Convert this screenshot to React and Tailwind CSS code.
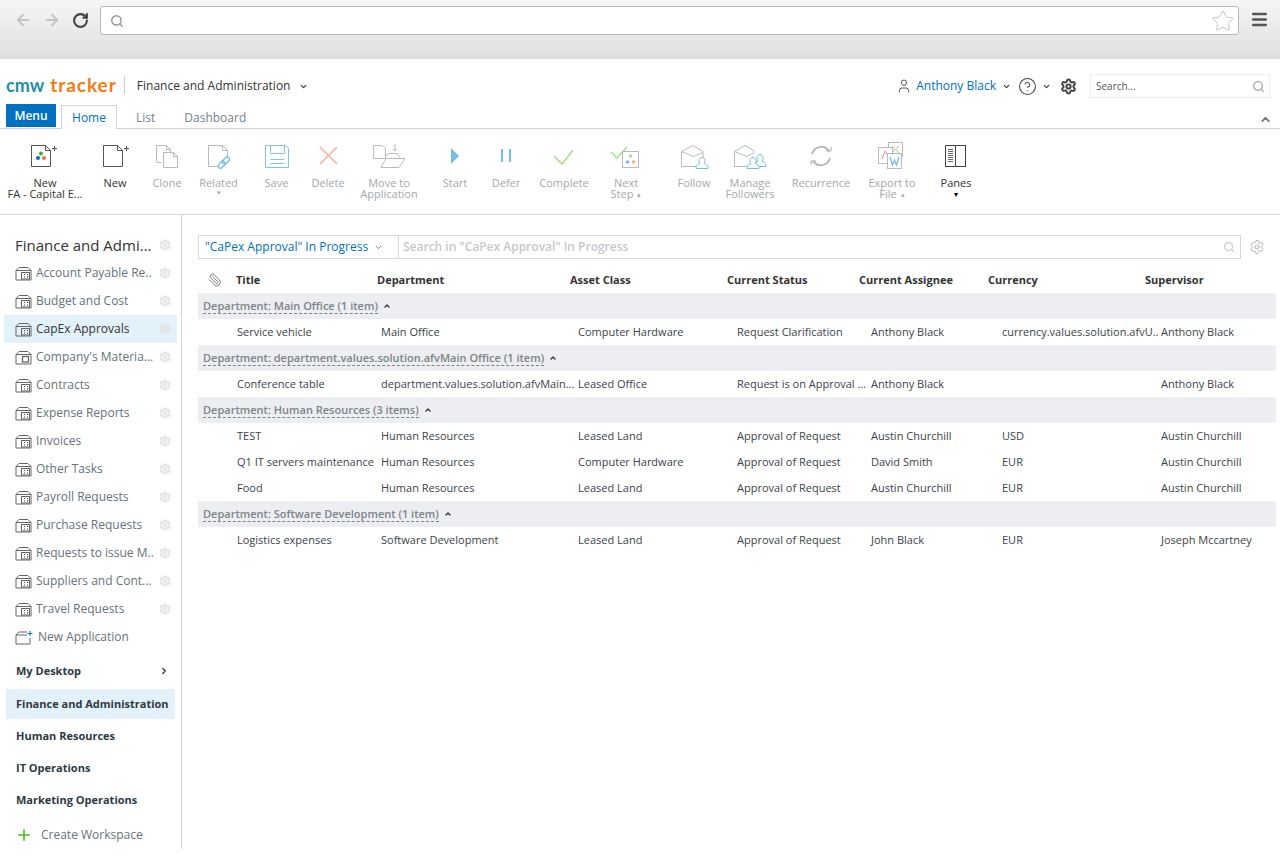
import React from "react";
import { ArrowLeft, ArrowRight, RotateCw, Search, Star, Menu, ChevronDown, ChevronUp, ChevronRight, Paperclip, Settings, User, HelpCircle, Plus } from "lucide-react";

const font = { fontFamily: '"Open Sans", sans-serif' };

function DocIcon({ plus, dx = 0, children }) {
  return (
    <svg width="36" height="28" viewBox="0 0 36 28" fill="none">
      <g transform={`translate(${dx} 0)`}>
        <path d="M6.500 3.500h14l5 5v16h-19z M20.500 3.500v5h5" stroke="#555" strokeWidth="1" />
        {plus && <path d="M27 6.500h5M29.500 4v5" stroke="#555" strokeWidth="1" />}
        {children}
      </g>
    </svg>
  );
}

const icons = {
  newFa: (
    <DocIcon plus dx={-2}>
      <circle cx="16" cy="11.500" r="2" fill="#3fb618" />
      <circle cx="13" cy="16" r="2" fill="#0070c0" />
      <circle cx="19" cy="16" r="2" fill="#e07a3f" />
    </DocIcon>
  ),
  newDoc: <DocIcon plus />,
  clone: (
    <svg width="36" height="28" viewBox="0 0 36 28" fill="none" stroke="#bbb">
      <path d="M7.500 3.500h10l4 4v4M7.500 3.500v17h5M14.500 10.500h10l4 4v11h-14z" />
      <path d="M17.500 3.500v4h4M24.500 10.500v4h4" />
    </svg>
  ),
  related: (
    <svg width="36" height="28" viewBox="0 0 36 28" fill="none" stroke="#bbb">
      <path d="M7.500 3.500h14l5 5v7M7.500 3.500v21h10M21.500 3.500v5h5" />
      <g stroke="#6bbde6" strokeWidth="1.200" transform="rotate(-45 23 20)">
        <rect x="15.500" y="18" width="8" height="4.500" rx="2.200" />
        <rect x="21.500" y="18" width="8" height="4.500" rx="2.200" />
      </g>
    </svg>
  ),
  save: (
    <svg width="36" height="28" viewBox="0 0 36 28" fill="none" stroke="#7cc4ea">
      <path d="M6.500 3.500h20l3 3v19h-23zM11.500 3.500v8h14v-8M11.500 17.500h14M11.500 21.500h14" />
    </svg>
  ),
  del: (
    <svg width="36" height="28" viewBox="0 0 36 28" fill="none" stroke="#f5b09c" strokeWidth="1.500">
      <path d="M10 5l17 17M27 5L10 22" />
    </svg>
  ),
  move: (
    <svg width="36" height="28" viewBox="0 0 36 28" fill="none" stroke="#bbb">
      <path d="M2.500 3.500h9l3 3v10h-12zM14.500 14.500l3-3h9l2 4M10 25.500l5-9h19l-6 9zM24 2v7M22 7l2 2 2-2" />
    </svg>
  ),
  start: (
    <svg width="36" height="28" viewBox="0 0 36 28"><path d="M14 6l8 8-8 8z" fill="#75bfe6" /></svg>
  ),
  defer: (
    <svg width="36" height="28" viewBox="0 0 36 28" fill="#75bfe6"><rect x="13" y="7" width="2" height="13" /><rect x="21" y="7" width="2" height="13" /></svg>
  ),
  complete: (
    <svg width="36" height="28" viewBox="0 0 36 28" fill="none" stroke="#a5e08a" strokeWidth="1.500"><path d="M8 14l8 8L27 8" /></svg>
  ),
  next: (
    <svg width="36" height="28" viewBox="0 0 36 28" fill="none">
      <path d="M3 10l6 6 10-11" stroke="#a5e08a" strokeWidth="1.500" />
      <rect x="14.500" y="9.500" width="16" height="16" fill="#fff" stroke="#bbb" />
      <circle cx="22.500" cy="14" r="1.800" fill="#a5e08a" />
      <circle cx="19.500" cy="20" r="1.800" fill="#75bfe6" />
      <circle cx="25.500" cy="20" r="1.800" fill="#f5b09c" />
    </svg>
  ),
  follow: (
    <svg width="36" height="28" viewBox="0 0 36 28" fill="none" stroke="#bbb">
      <path d="M5.500 9.500L17 3.500l10 6v6M5.500 9.500v15h16M5.500 9.500l12 5 9-4" />
      <path d="M20 26.500c0-4 2-4 4-5-2-3-1-6 2-6s4 3 2 6c2 1 4 1 4 5z" fill="#fff" stroke="#75bfe6" />
    </svg>
  ),
  manage: (
    <svg width="36" height="28" viewBox="0 0 36 28" fill="none" stroke="#bbb">
      <path d="M2.500 9.500L13 3.500l10 6M2.500 9.500v15h14M2.500 9.500l12 5 8-4" />
      <path d="M22 24.500c0-3 1-4 4-5-2-3-1-7 2-7s4 4 2 7c3 1 4 2 4 5z" fill="#fff" stroke="#75bfe6" />
      <path d="M15 26.500c0-3 1-4 4-5-2-3-1-6 2-6s4 3 2 6c3 1 4 2 4 5z" fill="#fff" stroke="#75bfe6" />
    </svg>
  ),
  recurrence: (
    <svg width="36" height="28" viewBox="0 0 36 28" fill="none" stroke="#aaa" strokeWidth="1.500">
      <path d="M9 12a9.500 9.500 0 0 1 17-3M27 16a9.500 9.500 0 0 1-17 3" />
      <path d="M23 9h5V5M13 19H8v4" strokeWidth="1" />
    </svg>
  ),
  exportFile: (
    <svg width="36" height="28" viewBox="0 0 36 28" fill="none" stroke="#bbb">
      <rect x="14.500" y="0.500" width="14" height="14" fill="#fff" />
      <path d="M18 4l7 7M25 4l-7 7" stroke="#a5e08a" />
      <rect x="4.500" y="5.500" width="14" height="16" fill="#fff" />
      <path d="M8 17l3-8 4 7" stroke="#f08a8a" />
      <rect x="13.500" y="11.500" width="14" height="15" fill="#fff" />
      <path d="M16 15l2.500 8 2-5 2 5 2.500-8" stroke="#75bfe6" strokeWidth="1.300" />
    </svg>
  ),
  panes: (
    <svg width="36" height="28" viewBox="0 0 36 28" fill="none" stroke="#444">
      <rect x="7.500" y="3.500" width="20" height="21" />
      <path d="M17.500 3.500v21" />
      <path d="M10 7.500h5M10 9.500h5M10 11.500h5M10 13.500h5M10 15.500h5M10 17.500h5M10 19.500h5" strokeWidth="0.800" />
    </svg>
  ),
};

const tools = [
  { icon: "newFa", label: ["New", "FA - Capital E..."], w: "w-[78px]", dark: true },
  { icon: "newDoc", label: ["New"], w: "w-[62px]", dark: true },
  { icon: "clone", label: ["Clone"], w: "w-[42px]" },
  { icon: "related", label: ["Related"], w: "w-[61px]", caret: "below" },
  { icon: "save", label: ["Save"], w: "w-[55px]" },
  { icon: "del", label: ["Delete"], w: "w-[48px]" },
  { icon: "move", label: ["Move to", "Application"], w: "w-[74px]" },
  { icon: "start", label: ["Start"], w: "w-[58px]" },
  { icon: "defer", label: ["Defer"], w: "w-[44px]" },
  { icon: "complete", label: ["Complete"], w: "w-[72px]" },
  { icon: "next", label: ["Next", "Step"], w: "w-[52px]", caret: "inline" },
  { icon: "follow", label: ["Follow"], w: "w-[52px] ml-4" },
  { icon: "manage", label: ["Manage", "Followers"], w: "w-[60px]" },
  { icon: "recurrence", label: ["Recurrence"], w: "w-[82px]" },
  { icon: "exportFile", label: ["Export to", "File"], w: "w-[60px]", caret: "inline" },
  { icon: "panes", label: ["Panes"], w: "w-[68px]", dark: true, caret: "dark" },
];

function AppIcon({ variant }) {
  return (
    <svg width="17" height="15" viewBox="0 0 17 15" fill="none" stroke="#666" className="shrink-0">
      <path d="M1 4.500L4 1.500h9l3 3v9.500H1zM1 4.500h15" />
      {variant === "box" ? (
        <rect x="7.500" y="6.500" width="6" height="5.500" strokeWidth="1.300" />
      ) : (
        <>
          <rect x="6.500" y="6.500" width="8" height="6.500" />
          <path d="M9 8.500h1M12 8.500h1M9 11h1M12 11h1" stroke="#333" />
        </>
      )}
    </svg>
  );
}

const apps = [
  { name: "Account Payable Re.." },
  { name: "Budget and Cost" },
  { name: "CapEx Approvals", active: true },
  { name: "Company's Materia...", variant: "box" },
  { name: "Contracts" },
  { name: "Expense Reports" },
  { name: "Invoices" },
  { name: "Other Tasks" },
  { name: "Payroll Requests" },
  { name: "Purchase Requests" },
  { name: "Requests to issue M.." },
  { name: "Suppliers and Cont..." },
  { name: "Travel Requests" },
];

const workspaces = [
  { name: "My Desktop", arrow: true },
  { name: "Finance and Administration", active: true },
  { name: "Human Resources" },
  { name: "IT Operations" },
  { name: "Marketing Operations" },
];

const headers = [
  ["Title", "w-[141px]"],
  ["Department", "w-[193px]"],
  ["Asset Class", "w-[157px]"],
  ["Current Status", "w-[132px]"],
  ["Current Assignee", "w-[129px]"],
  ["Currency", "w-[157px]"],
  ["Supervisor", "w-[100px]"],
];

const groups = [
  {
    title: "Department: Main Office (1 item)",
    rows: [["Service vehicle", "Main Office", "Computer Hardware", "Request Clarification", "Anthony Black", "currency.values.solution.afvU..", "Anthony Black"]],
  },
  {
    title: "Department: department.values.solution.afvMain Office (1 item)",
    rows: [["Conference table", "department.values.solution.afvMain...", "Leased Office", "Request is on Approval ...", "Anthony Black", "", "Anthony Black"]],
  },
  {
    title: "Department: Human Resources (3 items)",
    rows: [
      ["TEST", "Human Resources", "Leased Land", "Approval of Request", "Austin Churchill", "USD", "Austin Churchill"],
      ["Q1 IT servers maintenance", "Human Resources", "Computer Hardware", "Approval of Request", "David Smith", "EUR", "Austin Churchill"],
      ["Food", "Human Resources", "Leased Land", "Approval of Request", "Austin Churchill", "EUR", "Austin Churchill"],
    ],
  },
  {
    title: "Department: Software Development (1 item)",
    rows: [["Logistics expenses", "Software Development", "Leased Land", "Approval of Request", "John Black", "EUR", "Joseph Mccartney"]],
  },
];

const cellWidths = ["w-[144px]", "w-[197px]", "w-[159px]", "w-[134px]", "w-[131px]", "w-[159px]", "w-[100px]"];

function Tool({ tool }) {
  const color = tool.dark ? "text-[#333]" : "text-[#a3a8ab]";
  return (
    <div className={`${tool.w} flex flex-col items-center shrink-0 pt-[13px] text-[11px] leading-[11px] ${color}`}>
      <div className="h-[28px] flex justify-center">{icons[tool.icon]}</div>
      <div className="mt-[7px] flex flex-col items-center whitespace-nowrap">
        {tool.label.map((line, i) => (
          <div key={line}>
            {line}
            {tool.caret === "inline" && i === tool.label.length - 1 && <span className="text-[7px] ml-1 align-middle">▾</span>}
          </div>
        ))}
        {tool.caret === "below" && <div className="text-[7px] leading-[9px]">▾</div>}
        {tool.caret === "dark" && <div className="text-[8px] leading-[11px] text-black">▾</div>}
      </div>
    </div>
  );
}

export default function App() {
  return (
    <div className="w-[1280px] h-[859px] overflow-hidden bg-white" style={font}>
      <div className="h-[59px] bg-gradient-to-b from-[#f6f6f6] to-[#dedede] flex items-start pt-[6px]">
        <div className="w-[100px] h-[28px] flex items-center shrink-0 pl-[14px] gap-[11px]">
          <ArrowLeft size={18} className="text-[#c4c4c4]" strokeWidth={2.500} />
          <ArrowRight size={18} className="text-[#c4c4c4]" strokeWidth={2.500} />
          <RotateCw size={17} className="text-[#444]" strokeWidth={3} />
        </div>
        <div className="w-[1139px] h-[29px] bg-white border border-[#b8b8b8] rounded-[3px] flex items-center justify-between pl-[9px] pr-[3px]">
          <Search size={14} className="text-[#999]" strokeWidth={2.500} />
          <Star size={24} className="text-[#c2c2c2]" strokeWidth={1} />
        </div>
        <Menu size={19} className="text-[#555] ml-[11px] mt-[4px]" strokeWidth={3} />
      </div>

      <div className="h-[46px] flex items-center pl-[6px] pr-[10px] pt-[8px]">
        <div className="flex items-center font-bold leading-none mb-[3px]" style={{ fontFamily: "Lato, sans-serif" }}>
          <span className="text-[#1f8fa8] text-[18px]">cmw</span>
          <span className="text-[#ee7d11] text-[19px] tracking-[1px] ml-[6px]">tracker</span>
        </div>
        <div className="w-px h-[18px] bg-[#ccc] ml-[7px] mb-[3px]"></div>
        <div className="text-[12px] text-[#333] ml-[12px] mb-[1px]">Finance and Administration</div>
        <ChevronDown size={9} className="text-[#333] ml-[9px]" strokeWidth={3} />
        <User size={16} className="text-[#555] ml-auto" strokeWidth={1.500} />
        <div className="text-[12px] text-[#0070c0] ml-[4px]">Anthony Black</div>
        <ChevronDown size={9} className="text-[#333] ml-[6px]" strokeWidth={3} />
        <HelpCircle size={19} className="text-[#444] ml-[7px]" strokeWidth={1.300} />
        <ChevronDown size={9} className="text-[#333] ml-[5px]" strokeWidth={3} />
        <Settings size={17} className="text-[#444] ml-[9px]" strokeWidth={2.800} />
        <div className="w-[180px] h-[24px] border border-[#e8eff7] ml-[13px] flex items-center justify-between pl-[5px] pr-[4px]">
          <span className="text-[10px] text-[#555]">Search...</span>
          <Search size={13} className="text-[#aaa]" strokeWidth={2.500} />
        </div>
      </div>

      <div className="h-[24px] border-b border-[#cdd5da] flex items-end pl-[6px] pr-[8px] relative">
        <div className="w-[50px] h-[23px] mb-px bg-[#0070c0] text-white text-[12px] font-semibold flex items-center justify-center">Menu</div>
        <div className="w-[56px] h-[24px] -mb-px ml-[5px] bg-white border border-b-0 border-[#cdd5da] text-[12px] text-[#0070c0] flex items-center justify-center">Home</div>
        <div className="text-[12px] text-[#74828c] ml-[19px] mb-px">List</div>
        <div className="text-[12px] text-[#74828c] ml-[29px] mb-px">Dashboard</div>
        <ChevronUp size={13} className="text-[#777] ml-auto mb-[2px]" strokeWidth={3.500} />
      </div>

      <div className="h-[86px] border-b border-[#cdd5da] flex pl-[6px]">
        {tools.map((tool) => (
          <Tool key={tool.icon} tool={tool} />
        ))}
      </div>

      <div className="flex h-[634px]">
        <div className="w-[182px] shrink-0 border-r border-[#d6d6d6] pt-[16px] px-[4px]">
          <div className="h-[28px] flex items-center pl-[11px] pr-[6px] justify-between">
            <span className="text-[15px] text-[#333]">Finance and Admi...</span>
            <Settings size={12} className="text-[#e2e2e2]" strokeWidth={3} />
          </div>
          {apps.map((app) => (
            <div key={app.name} className={`h-[28px] flex items-center pl-[11px] pr-[6px] ${app.active ? "bg-[#e3f1fa]" : ""}`}>
              <AppIcon variant={app.variant} />
              <span className={`text-[12px] ml-[4px] truncate ${app.active ? "text-[#333]" : "text-[#66727a]"}`}>{app.name}</span>
              <Settings size={12} className="text-[#e2e2e2] ml-auto shrink-0" strokeWidth={3} />
            </div>
          ))}
          <div className="h-[28px] flex items-center pl-[11px]">
            <svg width="18" height="15" viewBox="0 0 18 15" fill="none" stroke="#666" className="shrink-0">
              <path d="M1 5l3-3h8M1 5v9h14V8M1 5h11" />
              <path d="M15 1v5M12.500 3.500h5" stroke="#0070c0" />
            </svg>
            <span className="text-[12px] text-[#66727a] ml-[5px]">New Application</span>
          </div>
          <div className="mt-[4px] pl-[2px] w-[171px]">
            {workspaces.map((ws) => (
              <div key={ws.name} className={`flex items-center pl-[10px] pr-[6px] text-[11px] font-bold text-[#2d3a44] whitespace-nowrap ${ws.active ? "h-[30px] bg-[#e3f1fa] mt-[2px] mb-px" : "h-[32px]"}`}>
                {ws.name}
                {ws.arrow && <ChevronRight size={10} className="ml-auto text-[#333]" strokeWidth={3} />}
              </div>
            ))}
          </div>
          <div className="h-[33px] flex items-center pl-[11px] mt-[2px]">
            <Plus size={18} className="text-[#44bb11]" strokeWidth={2} />
            <span className="text-[12px] text-[#66727a] ml-[8px]">Create Workspace</span>
          </div>
        </div>

        <div className="flex-1 pl-[16px] pr-[4px] pt-[20px] min-w-0">
          <div className="flex items-center h-[24px]">
            <div className="w-[1043px] h-[24px] border border-[#d4d9dc] flex items-center shrink-0">
              <div className="w-[200px] h-full border-r border-[#d4d9dc] flex items-center pl-[6px] shrink-0">
                <span className="text-[12px] text-[#0070c0]">"CaPex Approval" In Progress</span>
                <ChevronDown size={9} className="text-[#777] ml-[6px]" strokeWidth={2.500} />
              </div>
              <span className="text-[12px] font-semibold text-[#c5c9cc] pl-[4px]">Search in "CaPex Approval" In Progress</span>
              <Search size={12} className="text-[#ccc] ml-auto mr-[5px]" strokeWidth={2.500} />
            </div>
            <Settings size={16} className="text-[#b5b5b5] ml-[8px]" strokeWidth={1.500} />
          </div>

          <div className="h-[26px] mt-[8px] flex items-center text-[11px] font-bold text-[#333] whitespace-nowrap">
            <div className="w-[38px] pl-[10px] shrink-0">
              <Paperclip size={14} className="text-[#666] -scale-x-100" strokeWidth={1.500} />
            </div>
            {headers.map(([name, w]) => (
              <div key={name} className={`${w} shrink-0`}>{name}</div>
            ))}
          </div>

          {groups.map((group) => (
            <div key={group.title}>
              <div className="h-[26px] bg-[#eceef1] flex items-center pl-[5px] text-[11px] font-semibold text-[#7d8489]">
                <span className="border-b border-dashed border-[#7d8489] leading-[15px]">{group.title}</span>
                <ChevronUp size={8} className="text-[#333] ml-[5px]" strokeWidth={4} />
              </div>
              {group.rows.map((row) => (
                <div key={row[0]} className="h-[26px] flex items-center pl-[39px] text-[11px] text-[#3b434a] whitespace-nowrap">
                  {row.map((cell, i) => (
                    <div key={i} className={`${cellWidths[i]} shrink-0`}>{cell}</div>
                  ))}
                </div>
              ))}
            </div>
          ))}
        </div>
      </div>
    </div>
  );
}
